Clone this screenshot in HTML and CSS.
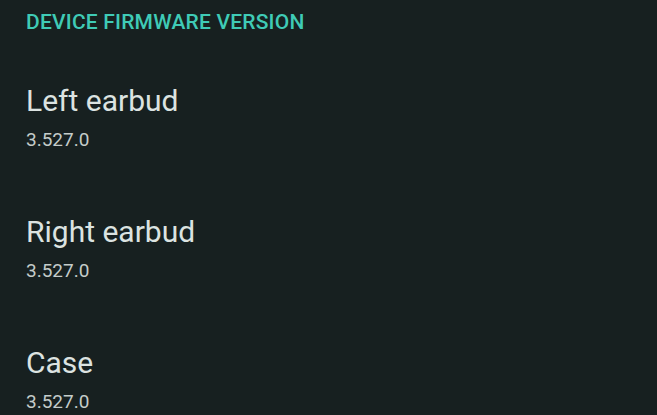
FILE: index.html
```html
<!DOCTYPE html>
<html lang="en">
<head>
    <meta charset="UTF-8">
    <meta name="viewport" content="width=device-width, initial-scale=1.0">
    <title>Device firmware version</title>
    <link rel="stylesheet" href="styles.css">
</head>
<body>
    <div class="section">
        <h2 class="section-title">DEVICE FIRMWARE VERSION</h2>

        <div class="item">
            <div class="item-title">Left earbud</div>
            <div class="item-summary">3.527.0</div>
        </div>

        <div class="item">
            <div class="item-title">Right earbud</div>
            <div class="item-summary">3.527.0</div>
        </div>

        <div class="item">
            <div class="item-title">Case</div>
            <div class="item-summary">3.527.0</div>
        </div>
    </div>
</body>
</html>
```

FILE: styles.css
```css
body {
    margin: 0;
    padding: 0;
    background-color: #172020;
    font-family: Roboto, "Open Sans", sans-serif;
    height: 415px;
    overflow: hidden;
}
.section {
    padding: 8px 26px 0;
}
.section-title {
    margin: 0;
    color: #3fcbb6;
    font-size: 21px;
    font-weight: 500;
    line-height: 28px;
    letter-spacing: 0.2px;
}
.item {
    padding-top: 47px;
}
.item + .item {
    padding-top: 59px;
}
.item-title {
    color: #dce3e1;
    font-size: 30px;
    line-height: 36px;
}
.item-summary {
    color: #c4ccca;
    font-size: 19px;
    line-height: 30px;
    margin-top: 6px;
}
```
